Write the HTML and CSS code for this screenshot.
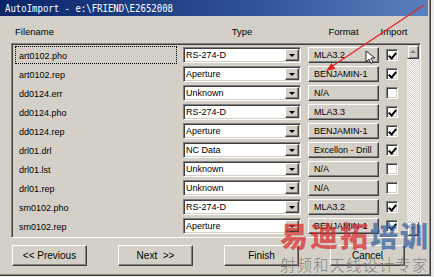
FILE: index.html
```html
<!DOCTYPE html>
<html>
<head>
    <title>AutoImport</title>
    <link rel="stylesheet" href="styles.css">
</head>
<body>
    <div class="window">
        <div class="titlebar"><span class="title-text">AutoImport - e:\FRIEND\E2652008</span></div>

        <div class="content">
            <div class="headers">
                <span class="h-name">Filename</span>
                <span class="h-type">Type</span>
                <span class="h-fmt">Format</span>
                <span class="h-imp">Import</span>
            </div>

            <div class="list">
                <div class="rows">
                    <div class="row">
                        <div class="fname focused">art0102.pho</div>
                        <div class="combo"><span>RS-274-D</span><i class="drop"></i></div>
                        <div class="fmt">MLA3.2</div>
                        <div class="chk checked"></div>
                    </div>
                    <div class="row">
                        <div class="fname">art0102.rep</div>
                        <div class="combo"><span>Aperture</span><i class="drop"></i></div>
                        <div class="fmt">BENJAMIN-1</div>
                        <div class="chk checked"></div>
                    </div>
                    <div class="row">
                        <div class="fname">dd0124.err</div>
                        <div class="combo"><span>Unknown</span><i class="drop"></i></div>
                        <div class="fmt">N/A</div>
                        <div class="chk"></div>
                    </div>
                    <div class="row">
                        <div class="fname">dd0124.pho</div>
                        <div class="combo"><span>RS-274-D</span><i class="drop"></i></div>
                        <div class="fmt">MLA3.3</div>
                        <div class="chk checked"></div>
                    </div>
                    <div class="row">
                        <div class="fname">dd0124.rep</div>
                        <div class="combo"><span>Aperture</span><i class="drop"></i></div>
                        <div class="fmt">BENJAMIN-1</div>
                        <div class="chk checked"></div>
                    </div>
                    <div class="row">
                        <div class="fname">drl01.drl</div>
                        <div class="combo"><span>NC Data</span><i class="drop"></i></div>
                        <div class="fmt">Excellon - Drill</div>
                        <div class="chk checked"></div>
                    </div>
                    <div class="row">
                        <div class="fname">drl01.lst</div>
                        <div class="combo"><span>Unknown</span><i class="drop"></i></div>
                        <div class="fmt">N/A</div>
                        <div class="chk"></div>
                    </div>
                    <div class="row">
                        <div class="fname">drl01.rep</div>
                        <div class="combo"><span>Unknown</span><i class="drop"></i></div>
                        <div class="fmt">N/A</div>
                        <div class="chk"></div>
                    </div>
                    <div class="row">
                        <div class="fname">sm0102.pho</div>
                        <div class="combo"><span>RS-274-D</span><i class="drop"></i></div>
                        <div class="fmt">MLA3.2</div>
                        <div class="chk checked"></div>
                    </div>
                    <div class="row">
                        <div class="fname">sm0102.rep</div>
                        <div class="combo"><span>Aperture</span><i class="drop"></i></div>
                        <div class="fmt">BENJAMIN-1</div>
                        <div class="chk checked"></div>
                    </div>
                </div>

                <div class="scrollbar">
                    <div class="sb-btn up"></div>
                    <div class="sb-track"></div>
                    <div class="sb-btn down"></div>
                </div>
            </div>

            <div class="buttons">
                <button class="win-button">&lt;&lt; Previous</button>
                <button class="win-button">Next &nbsp;&gt;&gt;</button>
                <button class="win-button">Finish</button>
                <button class="win-button">Cancel</button>
            </div>
        </div>

        <!-- annotation drawn over the screenshot -->
        <svg class="overlay" width="434" height="277" viewBox="0 0 434 277">
            <line x1="424" y1="5" x2="331" y2="67" stroke="#e42424" stroke-width="1.3"/>
            <polygon points="326,71 335.5,68.9 331.5,63.1" fill="#e42424"/>
            <path d="M366 51 L366 62 L369 59 L371 63.5 L373 62.5 L371 58 L375 58 Z" fill="#fff" stroke="#000" stroke-width="0.8" stroke-linejoin="round"/>
        </svg>

        <div class="watermark">
            <div class="wm-big"><span class="wm-red">易迪拓</span><span class="wm-blue">培训</span></div>
            <div class="wm-small">射频和天线设计专家</div>
        </div>
    </div>
</body>
</html>
```

FILE: styles.css
```css
* {
    box-sizing: border-box;
}

body {
    margin: 0;
    background-color: #ECECEC;
    font-family: "Liberation Sans", Arial, sans-serif;
    font-size: 9px;
    color: #000;
}

.window {
    position: relative;
    width: 431px;
    height: 276px;
    background-color: #D4D0C8;
    border-right: 1px solid #404040;
    border-bottom: 1px solid #404040;
    box-shadow: inset -1px -1px 0 #808080;
}

.titlebar {
    height: 16px;
    margin-right: 2px;
    padding-left: 5px;
    background: linear-gradient(90deg, #0A246A 0%, #2D4F95 55%, #5A7FBF 100%);
    display: flex;
    align-items: center;
}

.title-text {
    display: inline-block;
    color: #fff;
    font-family: "DejaVu Sans Mono", monospace;
    font-size: 9px;
    transform: scaleY(1.25);
    white-space: pre;
}

.content {
    padding: 10px 0 0 11px;
}

.headers {
    display: flex;
    height: 12px;
    line-height: 12px;
    margin-bottom: 5px;
    font-size: 9.5px;
}

.h-name {
    width: 172px;
    padding-left: 4px;
}

.h-type {
    width: 118px;
    text-align: center;
}

.h-fmt {
    width: 71px;
    margin-left: 7px;
    text-align: center;
}

.h-imp {
    width: 30px;
    text-align: center;
}

.list {
    display: flex;
    width: 410px;
    height: 195px;
    border: 1px solid;
    border-color: #808080 #fff #fff #808080;
    box-shadow: inset 1px 1px 0 #404040, inset -1px -1px 0 #D4D0C8;
    padding: 1px;
}

.rows {
    flex: 1;
    display: flex;
    flex-direction: column;
}

.row {
    display: flex;
    align-items: center;
    height: 19px;
}

.fname {
    width: 162px;
    height: 18px;
    margin-left: 2px;
    padding-left: 3px;
    line-height: 18px;
    border: 1px solid transparent;
}

.fname.focused {
    border: 1px dotted #000;
}

.combo {
    display: flex;
    align-items: center;
    justify-content: space-between;
    width: 118px;
    height: 16px;
    margin-left: 6px;
    padding-left: 1px;
    background-color: #fff;
    border: 1px solid;
    border-color: #808080 #fff #fff #808080;
    box-shadow: inset 1px 1px 0 #404040, inset -1px -1px 0 #D4D0C8;
}

.combo span {
    padding-left: 1px;
}

.drop {
    position: relative;
    width: 14px;
    height: 12px;
    margin-right: 1px;
    background-color: #D4D0C8;
    border: 1px solid;
    border-color: #fff #404040 #404040 #fff;
    box-shadow: inset -1px -1px 0 #808080;
}

.drop::after {
    content: "";
    position: absolute;
    left: 3px;
    top: 4px;
    border-left: 3.5px solid transparent;
    border-right: 3.5px solid transparent;
    border-top: 3.5px solid #000;
}

.fmt {
    width: 71px;
    height: 16px;
    margin-left: 7px;
    padding-left: 5px;
    line-height: 14px;
    white-space: nowrap;
    background-color: #D4D0C8;
    border: 1px solid;
    border-color: #fff #404040 #404040 #fff;
    box-shadow: inset -1px -1px 0 #808080;
}

.chk {
    position: relative;
    width: 12px;
    height: 12px;
    margin-left: 7px;
    background-color: #fff;
    border: 1px solid;
    border-color: #808080 #fff #fff #808080;
    box-shadow: inset 1px 1px 0 #404040, inset -1px -1px 0 #D4D0C8;
}

.chk.checked::after {
    content: "";
    position: absolute;
    left: 3px;
    top: 1px;
    width: 3px;
    height: 6px;
    border-right: 2px solid #000;
    border-bottom: 2px solid #000;
    transform: rotate(40deg);
}

.scrollbar {
    display: flex;
    flex-direction: column;
    width: 12px;
}

.sb-btn {
    position: relative;
    height: 14px;
    background-color: #D4D0C8;
    border: 1px solid;
    border-color: #D4D0C8 #404040 #404040 #D4D0C8;
    box-shadow: inset 1px 1px 0 #fff, inset -1px -1px 0 #808080;
}

.sb-btn::after {
    content: "";
    position: absolute;
    left: 2px;
    top: 4px;
    border-left: 3px solid transparent;
    border-right: 3px solid transparent;
}

.sb-btn.up::after {
    border-bottom: 3px solid #808080;
}

.sb-btn.down::after {
    border-top: 3px solid #808080;
}

.sb-track {
    flex: 1;
    background: repeating-conic-gradient(#D4D0C8 0 25%, #fff 0 50%) 0 0 / 2px 2px;
}

.buttons {
    display: flex;
    gap: 31px;
    margin-top: 7px;
    padding-left: 1px;
}

.win-button {
    width: 75px;
    height: 21px;
    padding: 0;
    font-family: "Liberation Sans", Arial, sans-serif;
    font-size: 10px;
    color: #000;
    background-color: #D4D0C8;
    border: 1px solid;
    border-color: #fff #404040 #404040 #fff;
    box-shadow: inset -1px -1px 0 #808080;
    white-space: nowrap;
}

.overlay {
    position: absolute;
    left: 0;
    top: 0;
    pointer-events: none;
}

.watermark {
    position: absolute;
    left: 280px;
    top: 219px;
    width: 154px;
    pointer-events: none;
    font-family: "Noto Sans CJK SC", sans-serif;
}

.wm-big {
    font-size: 28px;
    font-weight: 900;
    line-height: 32px;
    letter-spacing: 2px;
    white-space: nowrap;
}

.wm-red {
    color: rgba(214, 44, 44, 0.72);
}

.wm-blue {
    color: rgba(52, 96, 160, 0.72);
}

.wm-small {
    margin-top: 3px;
    font-size: 15.5px;
    font-weight: 300;
    line-height: 20px;
    letter-spacing: 1px;
    white-space: nowrap;
    color: rgba(110, 110, 110, 0.8);
}
```
